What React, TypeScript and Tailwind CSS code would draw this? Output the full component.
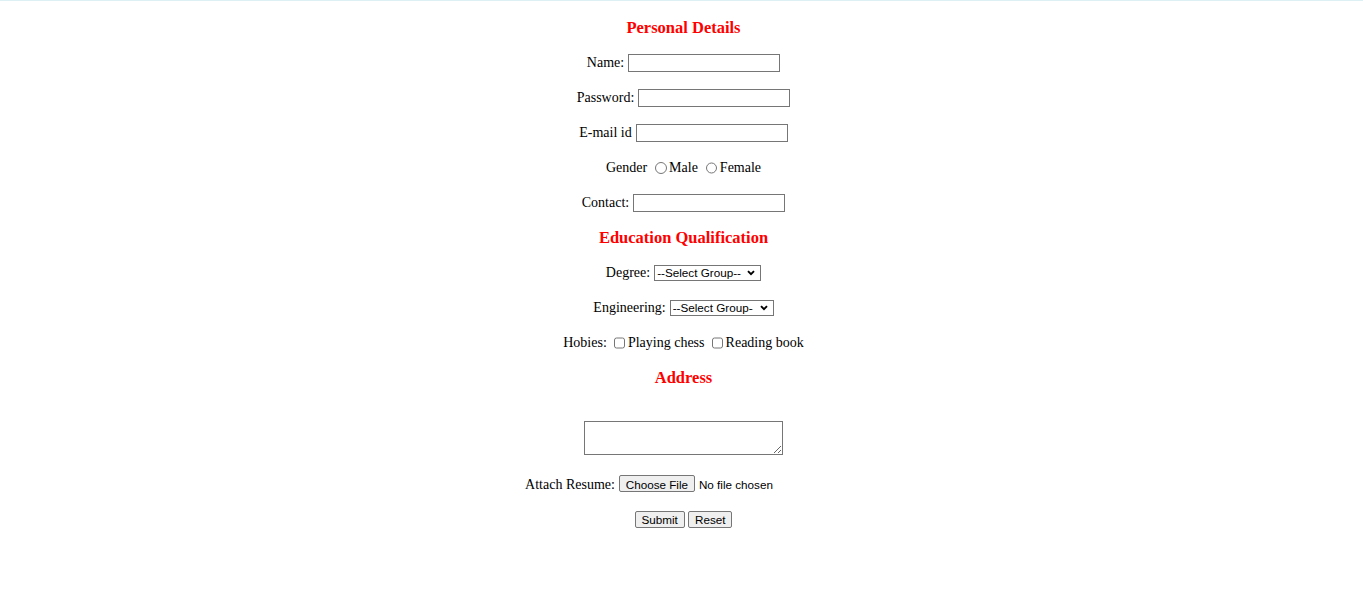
import { ReactNode } from "react";

const Row = ({ children }: { children: ReactNode }) => (
  <div className="h-[35px] flex items-center justify-center">{children}</div>
);

const Heading = ({ title }: { title: string }) => (
  <div className="h-[35px] flex items-center justify-center pt-[2px]">
    <h3 className="text-[16.5px] font-bold text-[#ff0000]">{title}</h3>
  </div>
);

const TextField = ({ type = "text" }: { type?: string }) => (
  <input
    type={type}
    className="ml-[4px] w-[152px] h-[18px] border border-[#767676] bg-white px-[2px] text-[12px] outline-none"
  />
);

const Select = ({ width, pad }: { width: string; pad: string }) => (
  <div className={`relative flex ml-[4px] mt-[1px] h-[16px] ${width}`}>
    <select
      className={`block w-full h-[16px] appearance-none border border-[#767676] bg-white pl-[2px] py-0 font-['Liberation_Sans',Arial,sans-serif] text-[11.7px] leading-[14px] text-black outline-none ${pad}`}
    >
      <option>--Select Group--</option>
      <option>B.E</option>
      <option>B.Tech</option>
    </select>
    <svg
      viewBox="0 0 8 6"
      className="pointer-events-none absolute right-[6px] top-[5px] w-[8px] h-[6px]"
    >
      <path d="M1 1.2 4 4.2 7 1.2" fill="none" stroke="#000" strokeWidth="1.9" />
    </svg>
  </div>
);

const Radio = ({ label }: { label: string }) => (
  <label className="flex items-center">
    <input type="radio" name="gender" className="ml-[4.5px] mr-[2.6px] w-[11.4px] h-[11.4px] mt-[1px]" />
    <span>{label}</span>
  </label>
);

const Check = ({ label }: { label: string }) => (
  <label className="flex items-center">
    <input type="checkbox" className="ml-[3.6px] mr-[2.6px] w-[11.4px] h-[11.4px] mt-[1px]" />
    <span>{label}</span>
  </label>
);

const btn =
  "h-[17px] border border-[#767676] bg-[#efefef] rounded-[2px] px-[5.8px] font-['Liberation_Sans',Arial,sans-serif] text-[11.7px] leading-[13px] text-black";

export default function App() {
  return (
    <div className="min-h-[606px] bg-white border-t border-[#ddf0f3] pt-[9px] pl-[4px] font-['Liberation_Serif','Times_New_Roman',serif] text-[14px] text-black">
      <form className="flex flex-col">
        <Heading title="Personal Details" />
        <Row>
          <span>Name:</span>
          <TextField />
        </Row>
        <Row>
          <span>Password:</span>
          <TextField type="password" />
        </Row>
        <Row>
          <span>E-mail id</span>
          <TextField type="email" />
        </Row>
        <Row>
          <span className="mr-[3.5px]">Gender</span>
          <Radio label="Male" />
          <span className="w-[3.5px]" />
          <Radio label="Female" />
        </Row>
        <Row>
          <span>Contact:</span>
          <TextField type="tel" />
        </Row>
        <Heading title="Education Qualification" />
        <Row>
          <span>Degree:</span>
          <Select width="w-[107px]" pad="pr-[18px]" />
        </Row>
        <Row>
          <span>Engineering:</span>
          <Select width="w-[104px]" pad="pr-[20px]" />
        </Row>
        <Row>
          <span className="mr-[3.5px]">Hobies:</span>
          <Check label="Playing chess" />
          <span className="w-[3.5px]" />
          <Check label="Reading book" />
        </Row>
        <Heading title="Address" />
        <div className="h-[71px] flex justify-center pt-[26px]">
          <textarea className="block w-[199px] h-[34px] border border-[#767676] bg-white outline-none resize" />
        </div>
        <div className="h-[35px] flex items-center justify-center pt-[2px]">
          <span className="mr-[4px]">Attach Resume:</span>
          <input
            type="file"
            className="w-[223px] font-['Liberation_Sans',Arial,sans-serif] text-[11.7px] file:h-[17px] file:mr-[4px] file:border file:border-[#767676] file:bg-[#efefef] file:rounded-[2px] file:px-[5.8px] file:text-black"
          />
        </div>
        <div className="h-[35px] flex items-center justify-center pt-[2px]">
          <button type="submit" className={btn}>
            Submit
          </button>
          <button type="reset" className={`${btn} ml-[3.5px]`}>
            Reset
          </button>
        </div>
      </form>
    </div>
  );
}
